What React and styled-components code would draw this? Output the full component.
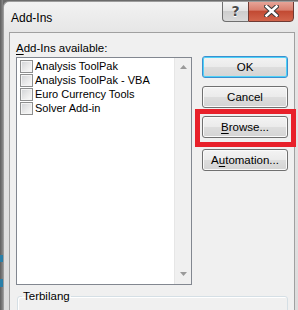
import React from 'react';
import styled, { createGlobalStyle } from 'styled-components';

const GlobalStyle = createGlobalStyle`
	html, body {
		margin: 0;
		padding: 0;
		background: #6b6b6b;
		overflow: hidden;
	}
	* {
		box-sizing: border-box;
	}
`;

const addIns = ['Analysis ToolPak', 'Analysis ToolPak - VBA', 'Euro Currency Tools', 'Solver Add-in'];

const App = () => {
	return (
		<>
			<GlobalStyle />
			<Screen>
				<Behind />
				<Window>
					<TitleBar>
						<Title>Add-Ins</Title>
						<Controls>
							<HelpButton>?</HelpButton>
							<CloseButton>
								<svg width='15' height='12' viewBox='0 0 15 12'>
									<path d='M2.5 1.5 L12.5 10.5 M12.5 1.5 L2.5 10.5' stroke='#3a3a3a' strokeWidth='4.6' strokeLinecap='square' />
									<path d='M2.5 1.5 L12.5 10.5 M12.5 1.5 L2.5 10.5' stroke='#ffffff' strokeWidth='2.6' strokeLinecap='square' />
								</svg>
							</CloseButton>
						</Controls>
					</TitleBar>
					<Client>
						<Top>
							<LeftCol>
								<Label>
									<u>A</u>dd-Ins available:
								</Label>
								<ListBox>
									<Items>
										{addIns.map((name) => (
											<Item key={name}>
												<Check />
												<span>{name}</span>
											</Item>
										))}
									</Items>
									<ScrollBar>
										<svg width='7' height='4' viewBox='0 0 7 4'>
											<path d='M0 4 L3.5 0 L7 4 Z' fill='#9a9a9a' />
										</svg>
										<svg width='7' height='4' viewBox='0 0 7 4'>
											<path d='M0 0 L7 0 L3.5 4 Z' fill='#9a9a9a' />
										</svg>
									</ScrollBar>
								</ListBox>
							</LeftCol>
							<RightCol>
								<Button $primary>OK</Button>
								<Button>Cancel</Button>
								<Button>
									<u>B</u>rowse...
								</Button>
								<Button $extra>
									A<u>u</u>tomation...
								</Button>
							</RightCol>
						</Top>
						<Group>
							<Legend>Terbilang</Legend>
						</Group>
					</Client>
				</Window>
				<Highlight />
			</Screen>
		</>
	);
};

export default App;

const Screen = styled.div`
	position: relative;
	width: 298px;
	height: 310px;
	display: flex;
	overflow: hidden;
	font-family: 'Liberation Sans', Arial, sans-serif;
	color: #000;
`;

const Behind = styled.div`
	width: 3px;
	flex: none;
	background:
		linear-gradient(to bottom, transparent 255px, #2a7fa8 255px, #2a7fa8 262px, transparent 262px, transparent 279px, #2a7fa8 279px, #2a7fa8 287px, transparent 287px),
		linear-gradient(to right, #5e5e5e, #8a8a8a);
`;

const Window = styled.div`
	flex: 1;
	min-height: 0;
	display: flex;
	flex-direction: column;
	overflow: hidden;
	background: linear-gradient(to bottom, #f2f2f2 0px, #e6e6e6 30px, #dcdcdc 100%);
	border-left: 1px solid #9c9c9c;
	border-top: 1px solid #9c9c9c;
	border-top-left-radius: 6px;
	margin-top: 1px;
`;

const TitleBar = styled.div`
	flex: none;
	height: 30px;
	display: flex;
	justify-content: space-between;
	align-items: flex-start;
	padding-left: 7px;
`;

const Title = styled.div`
	font-size: 12px;
	line-height: 14px;
	margin-top: 9px;
`;

const Controls = styled.div`
	display: flex;
	margin-top: -2px;
	margin-right: 4px;
`;

const HelpButton = styled.div`
	width: 26px;
	height: 22px;
	border: 1px solid #6f6f6f;
	border-right: none;
	border-radius: 0 0 0 4px;
	background: linear-gradient(to bottom, #f6f6f6 0%, #e2e2e2 50%, #cdcdcd 51%, #dadada 100%);
	display: flex;
	align-items: center;
	justify-content: center;
	font-family: 'DejaVu Sans', sans-serif;
	font-weight: bold;
	font-size: 14px;
	color: #4a4a4a;
	text-shadow: 0 0 1px #fff, 0 1px 0 #fff;
`;

const CloseButton = styled.div`
	width: 46px;
	height: 22px;
	border: 1px solid #6f3a33;
	border-radius: 0 0 4px 0;
	background: linear-gradient(to bottom, #e8a89c 0%, #d9806f 45%, #c24a33 52%, #d2654c 100%);
	display: flex;
	align-items: center;
	justify-content: center;
`;

const Client = styled.div`
	flex: 1;
	min-height: 0;
	overflow: hidden;
	margin: 0 3px 0 5px;
	border: 1px solid #a0a0a0;
	border-bottom: none;
	background: #f0f0f0;
	padding: 0 0 0 6px;
	display: flex;
	flex-direction: column;
`;

const Top = styled.div`
	flex: none;
	display: flex;
	gap: 10px;
`;

const LeftCol = styled.div`
	display: flex;
	flex-direction: column;
	width: 176px;
`;

const Label = styled.div`
	flex: none;
	font-size: 11.5px;
	line-height: 14px;
	padding-top: 8px;
	height: 24px;

	u {
		text-underline-offset: 2px;
	}
`;

const ListBox = styled.div`
	flex: none;
	height: 228px;
	border: 1px solid #828790;
	background: #fff;
	display: flex;
`;

const Items = styled.div`
	flex: 1;
	padding: 1px 0 0 3px;
`;

const Item = styled.div`
	height: 14px;
	display: flex;
	align-items: center;
	gap: 2px;
	font-size: 11px;
	white-space: nowrap;
`;

const Check = styled.div`
	width: 13px;
	height: 13px;
	flex: none;
	border: 1px solid #8e8f8f;
	background: linear-gradient(135deg, #d0d2d5 0%, #eaeaea 55%, #fbfbfb 100%);
	box-shadow: inset 0 0 0 1px #f4f4f4;
`;

const ScrollBar = styled.div`
	width: 17px;
	flex: none;
	background: #f0f0f0;
	border-left: 1px solid #e6e6e6;
	display: flex;
	flex-direction: column;
	justify-content: space-between;
	align-items: center;
	padding: 7px 0 8px;
`;

const RightCol = styled.div`
	display: flex;
	flex-direction: column;
	gap: 8px;
	padding-top: 23px;
`;

const Button = styled.div`
	flex: none;
	width: 86px;
	height: 22px;
	margin-top: ${(p) => (p.$extra ? '3px' : '0')};
	border: 1px solid ${(p) => (p.$primary ? '#3a8fd0' : '#707070')};
	border-radius: 3px;
	background: linear-gradient(to bottom, #f3f3f3 0%, #ebebeb 48%, #dddddd 52%, #d4d4d4 100%);
	box-shadow: ${(p) => (p.$primary ? 'inset 0 0 0 1px #4fd1f7' : 'inset 0 0 0 1px #fafafa')};
	display: flex;
	align-items: center;
	justify-content: center;
	font-size: 11.5px;

	u {
		text-underline-offset: 2px;
	}
`;

const Group = styled.fieldset`
	flex: none;
	width: 271px;
	height: 40px;
	margin: 4px 0 0 1px;
	padding: 0;
	border: 1px solid #d5dfe5;
	border-radius: 3px;
	box-shadow: inset 1px 1px 0 #fff;
`;

const Legend = styled.legend`
	font-size: 11.5px;
	line-height: 15px;
	padding: 0 1px;
	margin-left: 4px;
`;

const Highlight = styled.div`
	position: absolute;
	left: 195px;
	top: 109px;
	width: 101px;
	height: 38px;
	border: 5px solid #e8202a;
	pointer-events: none;
`;
